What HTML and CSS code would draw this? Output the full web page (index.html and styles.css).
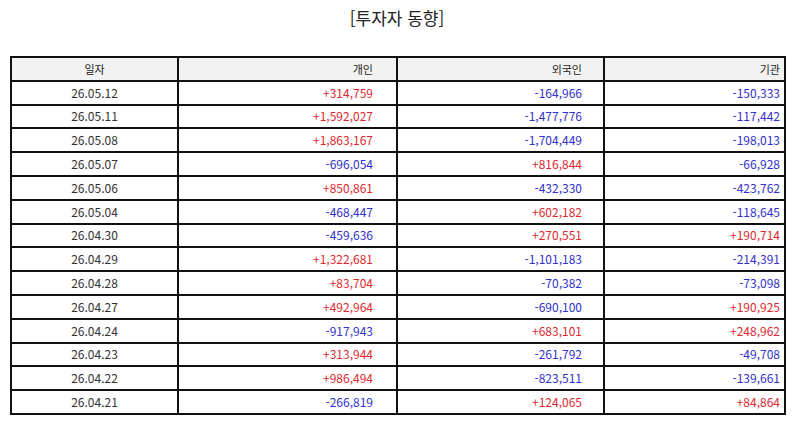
FILE: index.html
```html
<!DOCTYPE html>
<html lang="ko">
<head>
<meta charset="utf-8">
<link rel="stylesheet" href="styles.css">
</head>
<body>
<h1 class="title">[투자자 동향]</h1>
<table class="grid">
<colgroup>
<col class="w-date"><col class="w-ind"><col class="w-for"><col class="w-inst">
</colgroup>
<thead>
<tr><th class="c-date">일자</th><th class="c-ind">개인</th><th class="c-for">외국인</th><th class="c-inst">기관</th></tr>
</thead>
<tbody>
<tr><td class="c-date">26.05.12</td><td class="c-ind up">+314,759</td><td class="c-for dn">-164,966</td><td class="c-inst dn">-150,333</td></tr>
<tr><td class="c-date">26.05.11</td><td class="c-ind up">+1,592,027</td><td class="c-for dn">-1,477,776</td><td class="c-inst dn">-117,442</td></tr>
<tr><td class="c-date">26.05.08</td><td class="c-ind up">+1,863,167</td><td class="c-for dn">-1,704,449</td><td class="c-inst dn">-198,013</td></tr>
<tr><td class="c-date">26.05.07</td><td class="c-ind dn">-696,054</td><td class="c-for up">+816,844</td><td class="c-inst dn">-66,928</td></tr>
<tr><td class="c-date">26.05.06</td><td class="c-ind up">+850,861</td><td class="c-for dn">-432,330</td><td class="c-inst dn">-423,762</td></tr>
<tr><td class="c-date">26.05.04</td><td class="c-ind dn">-468,447</td><td class="c-for up">+602,182</td><td class="c-inst dn">-118,645</td></tr>
<tr><td class="c-date">26.04.30</td><td class="c-ind dn">-459,636</td><td class="c-for up">+270,551</td><td class="c-inst up">+190,714</td></tr>
<tr><td class="c-date">26.04.29</td><td class="c-ind up">+1,322,681</td><td class="c-for dn">-1,101,183</td><td class="c-inst dn">-214,391</td></tr>
<tr><td class="c-date">26.04.28</td><td class="c-ind up">+83,704</td><td class="c-for dn">-70,382</td><td class="c-inst dn">-73,098</td></tr>
<tr><td class="c-date">26.04.27</td><td class="c-ind up">+492,964</td><td class="c-for dn">-690,100</td><td class="c-inst up">+190,925</td></tr>
<tr><td class="c-date">26.04.24</td><td class="c-ind dn">-917,943</td><td class="c-for up">+683,101</td><td class="c-inst up">+248,962</td></tr>
<tr><td class="c-date">26.04.23</td><td class="c-ind up">+313,944</td><td class="c-for dn">-261,792</td><td class="c-inst dn">-49,708</td></tr>
<tr><td class="c-date">26.04.22</td><td class="c-ind up">+986,494</td><td class="c-for dn">-823,511</td><td class="c-inst dn">-139,661</td></tr>
<tr><td class="c-date">26.04.21</td><td class="c-ind dn">-266,819</td><td class="c-for up">+124,065</td><td class="c-inst up">+84,864</td></tr>
</tbody>
</table>
</body>
</html>
```
FILE: styles.css
```css
html, body {
  margin: 0;
  padding: 0;
  background: #fff;
}
body {
  font-family: "Noto Sans CJK KR", "Noto Sans", sans-serif;
  color: #333;
  padding: 0 10px;
}
.title {
  margin: 0;
  padding-top: 6px;
  height: 56px;
  box-sizing: border-box;
  text-align: center;
  font-size: 17px;
  font-weight: 400;
  line-height: 24px;
  color: #222;
}
.grid {
  width: 774px;
  border-collapse: collapse;
  table-layout: fixed;
  font-size: 12px;
}
.w-date { width: 167px; }
.w-ind { width: 219px; }
.w-for { width: 207px; }
.w-inst { width: 181px; }
.grid th, .grid td {
  border: 2px solid #111;
  height: 21.8px;
  padding: 0;
  line-height: 14px;
  font-weight: 400;
  white-space: nowrap;
}
.grid th {
  background: #f2f2f2;
  color: #222;
  font-size: 11px;
}
.c-date { text-align: center; }
.c-ind { text-align: right; padding-right: 23px !important; }
.c-for { text-align: right; padding-right: 21px !important; }
.c-inst { text-align: right; padding-right: 4px !important; }
.up { color: #e0282f; }
.dn { color: #3131cf; }
```
